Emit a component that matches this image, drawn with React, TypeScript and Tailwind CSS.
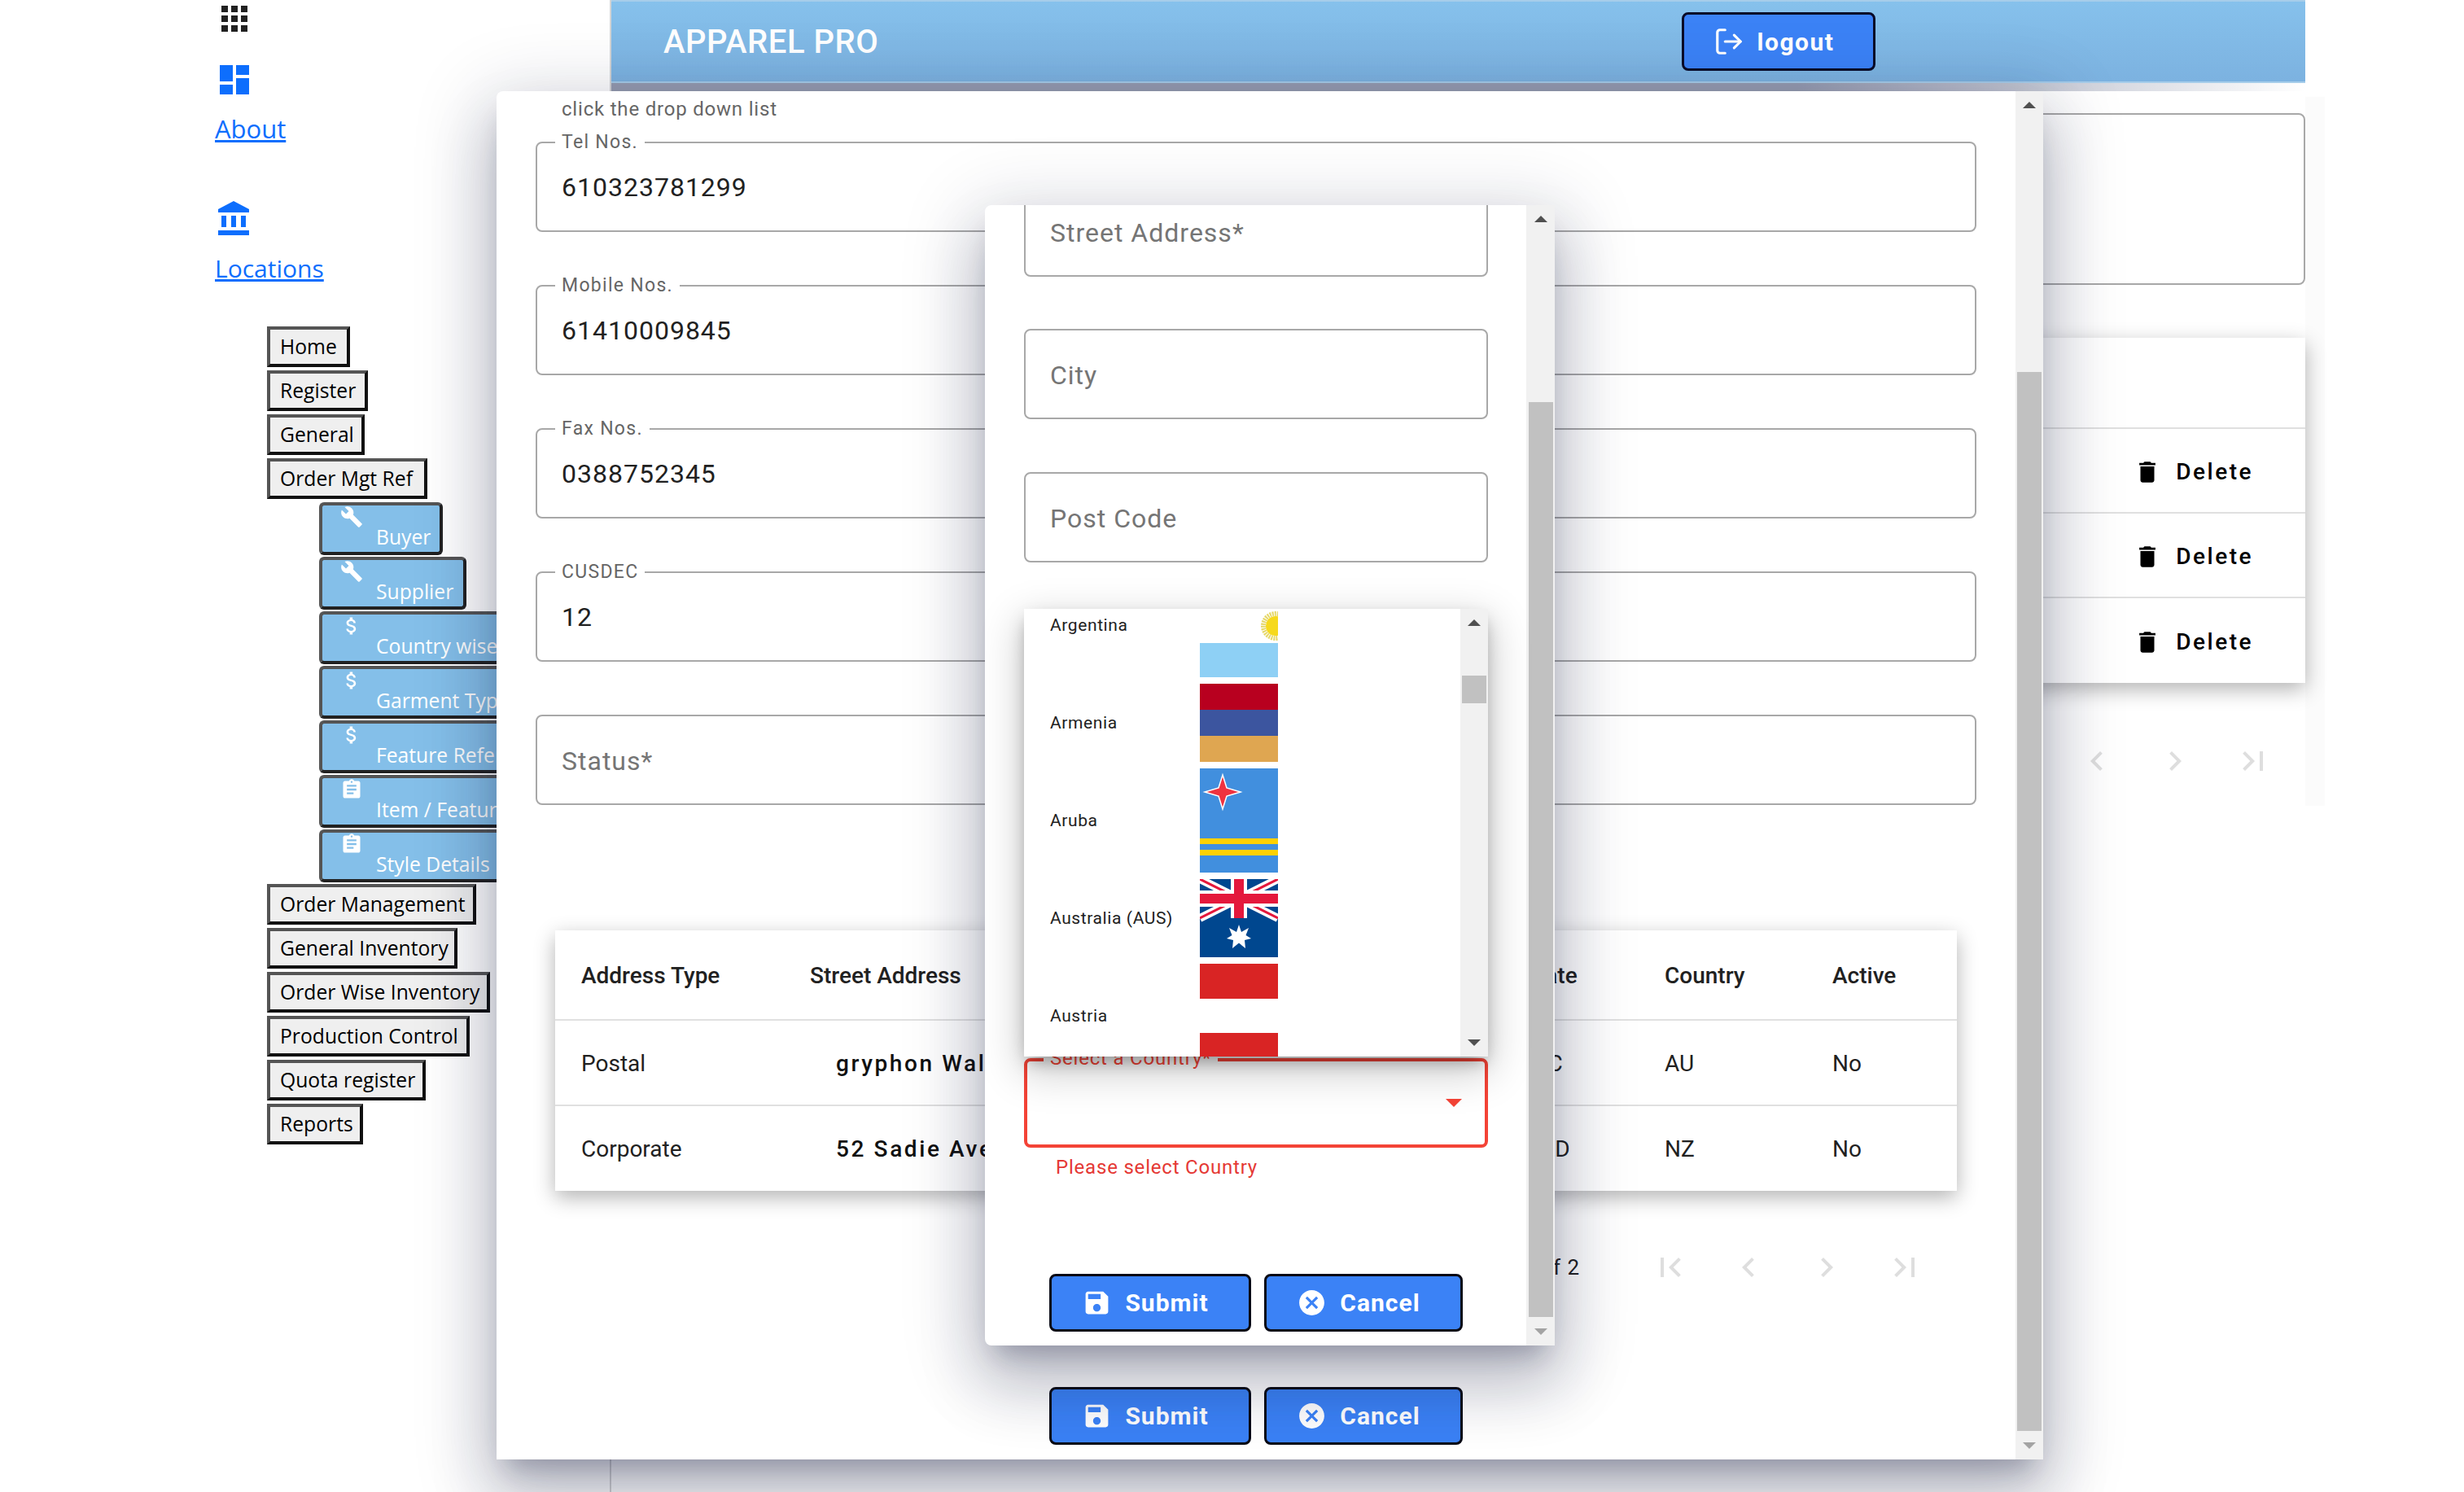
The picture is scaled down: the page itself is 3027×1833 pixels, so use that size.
import { LogOut } from 'lucide-react';
import type { ReactNode } from 'react';

const ICONS = {
  apps: 'M4 8h4V4H4v4zm6 12h4v-4h-4v4zm-6 0h4v-4H4v4zm0-6h4v-4H4v4zm6 0h4v-4h-4v4zm6-10v4h4V4h-4zm-6 4h4V4h-4v4zm6 6h4v-4h-4v4zm0 6h4v-4h-4v4z',
  dashboard: 'M3 13h8V3H3v10zm0 8h8v-6H3v6zm10 0h8V11h-8v10zm0-18v6h8V3h-8z',
  bank: 'M4 10v7h3v-7H4zm6 0v7h3v-7h-3zM2 22h19v-3H2v3zm14-12v7h3v-7h-3zm-4.5-9L2 6v2h19V6l-9.5-5z',
  build: 'M22.7 19l-9.1-9.1c.9-2.3.4-5-1.5-6.9-2-2-5-2.4-7.4-1.3L9 6 6 9 1.6 4.7C.4 7.1.9 10.1 2.9 12.1c1.9 1.9 4.6 2.4 6.9 1.5l9.1 9.1c.4.4 1 .4 1.4 0l2.3-2.3c.5-.4.5-1.1.1-1.4z',
  money: 'M11.8 10.9c-2.27-.59-3-1.2-3-2.15 0-1.09 1.01-1.85 2.7-1.85 1.78 0 2.44.85 2.5 2.1h2.21c-.07-1.72-1.12-3.3-3.21-3.81V3h-3v2.16c-1.94.42-3.5 1.68-3.5 3.61 0 2.31 1.91 3.46 4.7 4.13 2.5.6 3 1.48 3 2.41 0 .69-.49 1.79-2.7 1.79-2.06 0-2.87-.92-2.98-2.1h-2.2c.12 2.19 1.76 3.42 3.68 3.83V21h3v-2.15c1.95-.37 3.5-1.5 3.5-3.55 0-2.84-2.43-3.81-4.7-4.4z',
  assignment: 'M19 3h-4.18C14.4 1.84 13.3 1 12 1c-1.3 0-2.4.84-2.82 2H5c-1.1 0-2 .9-2 2v14c0 1.1.9 2 2 2h14c1.1 0 2-.9 2-2V5c0-1.1-.9-2-2-2zm-7 0c.55 0 1 .45 1 1s-.45 1-1 1-1-.45-1-1 .45-1 1-1zm2 14H7v-2h7v2zm3-4H7v-2h10v2zm0-4H7V7h10v2z',
  save: 'M17 3H5c-1.11 0-2 .9-2 2v14c0 1.1.89 2 2 2h14c1.1 0 2-.9 2-2V7l-4-4zm-5 16c-1.66 0-3-1.34-3-3s1.34-3 3-3 3 1.34 3 3-1.34 3-3 3zm3-10H5V5h10v4z',
  cancel: 'M12 2C6.47 2 2 6.47 2 12s4.47 10 10 10 10-4.47 10-10S17.53 2 12 2zm5 13.59L15.59 17 12 13.41 8.41 17 7 15.59 10.59 12 7 8.41 8.41 7 12 10.59 15.59 7 17 8.41 13.41 12 17 15.59z',
  trash: 'M6 19c0 1.1.9 2 2 2h8c1.1 0 2-.9 2-2V7H6v12zM19 4h-3.5l-1-1h-5l-1 1H5v2h14V4z',
  first: 'M18.41 16.59L13.82 12l4.59-4.59L17 6l-6 6 6 6zM6 6h2v12H6z',
  prev: 'M15.41 7.41L14 6l-6 6 6 6 1.41-1.41L10.83 12z',
  next: 'M10 6L8.59 7.41 13.17 12l-4.58 4.59L10 18l6-6z',
  last: 'M5.59 7.41L10.18 12l-4.59 4.59L7 18l6-6-6-6zM16 6h2v12h-2z',
};

type IconName = keyof typeof ICONS;

function Icon({ name, className }: { name: IconName; className: string }) {
  return (
    <svg viewBox="0 0 24 24" fill="currentColor" className={className}>
      <path d={ICONS[name]} />
    </svg>
  );
}

const DIALOG_SHADOW =
  'shadow-[0_22px_30px_-14px_rgba(20,25,60,0.28),0_48px_76px_6px_rgba(20,25,60,0.18),0_18px_92px_16px_rgba(20,25,60,0.16)]';

const TOP_MENU_A = [
  { label: 'Home', width: 'w-[102px]' },
  { label: 'Register', width: 'w-[124px]' },
  { label: 'General', width: 'w-[120px]' },
  { label: 'Order Mgt Ref', width: 'w-[197px]' },
];

const SUB_MENU: { label: string; icon: IconName; width: string }[] = [
  { label: 'Buyer', icon: 'build', width: 'w-[152px]' },
  { label: 'Supplier', icon: 'build', width: 'w-[181px]' },
  { label: 'Country wise Price', icon: 'money', width: 'w-[330px]' },
  { label: 'Garment Type', icon: 'money', width: 'w-[300px]' },
  { label: 'Feature Reference', icon: 'money', width: 'w-[330px]' },
  { label: 'Item / Feature', icon: 'assignment', width: 'w-[300px]' },
  { label: 'Style Details', icon: 'assignment', width: 'w-[300px]' },
];

const TOP_MENU_B = [
  { label: 'Order Management', width: 'w-[257px]' },
  { label: 'General Inventory', width: 'w-[234px]' },
  { label: 'Order Wise Inventory', width: 'w-[274px]' },
  { label: 'Production Control', width: 'w-[249px]' },
  { label: 'Quota register', width: 'w-[195px]' },
  { label: 'Reports', width: 'w-[118px]' },
];

function MenuButton({ label, width }: { label: string; width: string }) {
  return (
    <div
      className={`${width} h-[50px] mb-[4px] bg-[#efefef] border-[4px] border-t-[#555] border-l-[#555] border-r-[#111] border-b-[#111] pl-[12px] flex items-center font-['Open_Sans',sans-serif] text-[24.7px] text-black whitespace-nowrap`}
    >
      {label}
    </div>
  );
}

function SubMenuButton({ label, icon, width }: { label: string; icon: IconName; width: string }) {
  return (
    <div
      className={`${width} h-[65px] mb-[2px] shrink-0 bg-[#84bfe9] rounded-[6px] border-[4px] border-t-[#555] border-l-[#555] border-r-[#222] border-b-[#222] pl-[22px] flex flex-col font-['Open_Sans',sans-serif] text-[24.7px] leading-[30px] text-white whitespace-nowrap`}
    >
      <Icon name={icon} className="w-[28px] h-[28px] shrink-0 text-white" />
      <span className="ml-[44px] -mt-[4px]">{label}</span>
    </div>
  );
}

function Sidebar() {
  return (
    <aside className="w-[749px] shrink-0 pl-[264px] flex flex-col">
      <Icon name="apps" className="w-[48px] h-[48px] -mt-[1px] text-[#212121]" />
      <Icon name="dashboard" className="w-[48px] h-[48px] mt-[27px] text-[#0d6efd]" />
      <a className="self-start mt-[13px] font-['Open_Sans',sans-serif] text-[31px] leading-[46px] text-[#0d6efd] underline">
        About
      </a>
      <Icon name="bank" className="w-[48px] h-[48px] mt-[64px] text-[#0d6efd]" />
      <a className="self-start mt-[14px] font-['Open_Sans',sans-serif] text-[30px] leading-[46px] text-[#0d6efd] underline">
        Locations
      </a>
      <nav className="mt-[48px] ml-[64px] flex flex-col items-start">
        {TOP_MENU_A.map(m => (
          <MenuButton key={m.label} {...m} />
        ))}
        <div className="ml-[64px] flex flex-col items-start">
          {SUB_MENU.map(m => (
            <SubMenuButton key={m.label} {...m} />
          ))}
        </div>
        {TOP_MENU_B.map(m => (
          <MenuButton key={m.label} {...m} />
        ))}
      </nav>
    </aside>
  );
}

function Field({ label, value, placeholder, className }: { label?: string; value?: string; placeholder?: string; className: string }) {
  return (
    <div className={`relative h-[111px] shrink-0 rounded-[8px] border-2 border-[#a8a8a8] pl-[30px] flex items-center font-['Roboto',sans-serif] tracking-[1px] ${className}`}>
      {label && (
        <span className="absolute left-[22px] -top-[15px] bg-white px-[8px] text-[23px] leading-[28px] text-[#666] tracking-[1.3px]">
          {label}
        </span>
      )}
      {value && <span className="text-[32px] text-[#212121]">{value}</span>}
      {placeholder && <span className="pt-[2px] text-[32px] text-[#757575]">{placeholder}</span>}
    </div>
  );
}

function ActionButtons() {
  return (
    <div className="flex justify-center gap-[16px] font-['Roboto',sans-serif] font-bold text-[30px] tracking-[1px] text-white">
      <button type="button" className="w-[248px] h-[71px] pr-[12px] bg-[#3b82f6] border-[3px] border-[#0a0a14] rounded-[8px] flex items-center justify-center gap-[16px]">
        <Icon name="save" className="w-[37px] h-[37px]" />
        Submit
      </button>
      <button type="button" className="w-[244px] h-[71px] pr-[12px] bg-[#3b82f6] border-[3px] border-[#0a0a14] rounded-[8px] flex items-center justify-center gap-[16px]">
        <Icon name="cancel" className="w-[37px] h-[37px]" />
        Cancel
      </button>
    </div>
  );
}

function Scrollbar({ width, thumb, downColor }: { width: string; thumb: string; downColor: string }) {
  return (
    <div className={`${width} shrink-0 h-full bg-[#f1f1f1] flex flex-col items-center relative`}>
      <div className="h-[34px] w-full flex items-center justify-center shrink-0">
        <div className="w-0 h-0 border-x-[8px] border-x-transparent border-b-[8px] border-b-[#505050]" />
      </div>
      <div className={`w-[30px] bg-[#c1c1c1] ${thumb}`} />
      <div className="absolute bottom-0 h-[34px] w-full flex items-center justify-center">
        <div className={`w-0 h-0 border-x-[8px] border-x-transparent border-t-[8px] ${downColor}`} />
      </div>
    </div>
  );
}

const ADDRESS_ROWS = [
  { type: 'Postal', street: 'gryphon Walk', state: 'VIC', country: 'AU', active: 'No' },
  { type: 'Corporate', street: '52 Sadie Ave', state: 'QLD', country: 'NZ', active: 'No' },
];

const TABLE_COLS = 'grid grid-cols-[281px_877px_173px_206px_1fr] pl-[32px] items-center';

function AddressTable() {
  return (
    <div className="ml-[24px] w-[1722px] bg-white shadow-[0_8px_24px_rgba(0,0,0,0.3)] font-['Roboto',sans-serif] text-[28px] text-[#212121]">
      <div className={`${TABLE_COLS} h-[111px] pt-[2px] border-b-2 border-[#e0e0e0] font-medium`}>
        <span>Address Type</span>
        <span>Street Address</span>
        <span>State</span>
        <span>Country</span>
        <span>Active</span>
      </div>
      {ADDRESS_ROWS.map((r, i) => (
        <div key={r.type} className={`${TABLE_COLS} pt-[2px] ${i === 0 ? 'h-[105px] border-b-2 border-[#e0e0e0]' : 'h-[104px]'}`}>
          <span>{r.type}</span>
          <span className="pl-[32px] font-medium tracking-[2.6px] text-[#111]">{r.street}</span>
          <span className="pl-[4px]">{r.state}</span>
          <span>{r.country}</span>
          <span>{r.active}</span>
        </div>
      ))}
    </div>
  );
}

function Pager({ children, className, icons }: { children?: ReactNode; className: string; icons: IconName[] }) {
  return (
    <div className={`flex items-center justify-end h-[96px] font-['Roboto',sans-serif] text-[26px] text-[#212121] tracking-[1px] ${className}`}>
      {children}
      {icons.map(n => (
        <div key={n} className="w-[96px] flex justify-center">
          <Icon name={n} className="w-[48px] h-[48px] text-[#dedede]" />
        </div>
      ))}
    </div>
  );
}

function MainDialog() {
  return (
    <div className={`absolute left-[610px] top-[112px] w-[1900px] h-[1681px] z-10 bg-white rounded-tl-[8px] flex ${DIALOG_SHADOW}`}>
      <div className="flex-1 min-w-0 overflow-hidden pl-[48px] pr-[48px] flex flex-col">
        <p className="pl-[32px] mt-[8px] h-[28px] font-['Roboto',sans-serif] text-[24px] leading-[28px] tracking-[0.8px] text-[#666]">
          click the drop down list
        </p>
        <Field label="Tel Nos." value="610323781299" className="mt-[26px]" />
        <Field label="Mobile Nos." value="61410009845" className="mt-[65px]" />
        <Field label="Fax Nos." value="0388752345" className="mt-[65px]" />
        <Field label="CUSDEC" value="12" className="mt-[65px]" />
        <Field placeholder="Status*" className="mt-[65px]" />
        <div className="mt-[154px]">
          <AddressTable />
        </div>
        <Pager className="mt-[46px] w-[1746px] pr-[16px]" icons={['first', 'prev', 'next', 'last']}>
          <span className="mr-[63px]">1-2 of 2</span>
        </Pager>
        <div className="mt-[99px]">
          <ActionButtons />
        </div>
      </div>
      <Scrollbar width="w-[34px]" thumb="mt-[311px] h-[1301px]" downColor="border-t-[#a3a3a3]" />
    </div>
  );
}

function CountryDialog() {
  return (
    <div className={`absolute left-[1210px] top-[252px] w-[700px] h-[1401px] z-20 bg-white rounded-l-[8px] flex ${DIALOG_SHADOW}`}>
      <div className="flex-1 min-w-0 overflow-hidden pl-[48px] pr-[47px] flex flex-col">
        <Field placeholder="Street Address*" className="-mt-[23px]" />
        <Field placeholder="City" className="mt-[64px]" />
        <Field placeholder="Post Code" className="mt-[65px]" />
        <div className="relative mt-[609px] h-[110px] shrink-0 rounded-[8px] border-[4px] border-[#f44336] flex items-center justify-end pr-[28px]">
          <span className="absolute left-[20px] -top-[18px] bg-white px-[8px] font-['Roboto',sans-serif] text-[24px] leading-[28px] tracking-[0.8px] text-[#f44336]">
            Select a Country*
          </span>
          <div className="w-0 h-0 border-x-[10px] border-x-transparent border-t-[10px] border-t-[#f44336]" />
        </div>
        <p className="mt-[10px] pl-[39px] h-[28px] font-['Roboto',sans-serif] text-[24px] leading-[28px] tracking-[0.8px] text-[#e53935]">
          Please select Country
        </p>
        <div className="mt-[117px]">
          <ActionButtons />
        </div>
      </div>
      <Scrollbar width="w-[35px]" thumb="mt-[208px] h-[1124px]" downColor="border-t-[#a3a3a3]" />
    </div>
  );
}

function FlagArgentina() {
  return (
    <svg viewBox="0 0 96 128" className="w-[96px] h-[128px] shrink-0">
      <rect width="96" height="128" fill="#fff" />
      <rect width="96" height="43" fill="#8ed0f5" />
      <rect y="86" width="96" height="42" fill="#8ed0f5" />
      <circle cx="93" cy="65" r="15" fill="none" stroke="#e6d86a" strokeWidth="6" strokeDasharray="2 1" />
      <circle cx="93" cy="65" r="12" fill="#f6d91c" />
    </svg>
  );
}

function FlagArmenia() {
  return (
    <svg viewBox="0 0 96 96" className="w-[96px] h-[96px] shrink-0">
      <rect width="96" height="32" fill="#b8001f" />
      <rect y="32" width="96" height="32" fill="#3c559f" />
      <rect y="64" width="96" height="32" fill="#dfa651" />
    </svg>
  );
}

function FlagAruba() {
  return (
    <svg viewBox="0 0 96 128" className="w-[96px] h-[128px] shrink-0">
      <rect width="96" height="128" fill="#418fde" />
      <rect y="86" width="96" height="7" fill="#ffd100" />
      <rect y="100" width="96" height="7" fill="#ffd100" />
      <path d="M28 8 L33 24 L50 29 L33 34 L28 50 L23 34 L6 29 L23 24 Z" fill="#ef3340" stroke="#fff" strokeWidth="1.5" />
    </svg>
  );
}

function FlagAustralia() {
  return (
    <svg viewBox="0 0 96 96" className="w-[96px] h-[96px] shrink-0">
      <rect width="96" height="96" fill="#00478f" />
      <path d="M0 0 L96 48 M96 0 L0 48" stroke="#fff" strokeWidth="10" />
      <path d="M0 0 L96 48 M96 0 L0 48" stroke="#e4183c" strokeWidth="3" />
      <rect x="38" width="20" height="48" fill="#fff" />
      <rect y="14" width="96" height="20" fill="#fff" />
      <rect x="42" width="12" height="48" fill="#e4183c" />
      <rect y="18" width="96" height="12" fill="#e4183c" />
      <path d="M48 56 L51 65 L60 60 L56.5 69 L63 73 L55 75 L56 85 L48 78.5 L40 85 L41 75 L33 73 L39.5 69 L36 60 L45 65 Z" fill="#fff" />
    </svg>
  );
}

function FlagAustria() {
  return (
    <svg viewBox="0 0 96 128" className="w-[96px] h-[128px] shrink-0">
      <rect width="96" height="128" fill="#fff" />
      <rect width="96" height="43" fill="#d92424" />
      <rect y="85" width="96" height="43" fill="#d92424" />
    </svg>
  );
}

const COUNTRIES = [
  { name: 'Argentina', flag: <FlagArgentina /> },
  { name: 'Armenia', flag: <FlagArmenia /> },
  { name: 'Aruba', flag: <FlagAruba /> },
  { name: 'Australia (AUS)', flag: <FlagAustralia /> },
  { name: 'Austria', flag: <FlagAustria /> },
];

function CountryMenu() {
  return (
    <div className="absolute left-[1258px] top-[748px] w-[570px] h-[550px] z-30 bg-white flex overflow-hidden shadow-[0_10px_20px_-5px_rgba(0,0,0,0.35),0_16px_48px_4px_rgba(0,0,0,0.2)]">
      <ul className="flex-1 min-w-0 -mt-[44px] flex flex-col gap-[8px] font-['Roboto',sans-serif] text-[21px] tracking-[0.6px] text-[#212121]">
        {COUNTRIES.map(c => (
          <li key={c.name} className="flex items-center pl-[32px]">
            <span className="w-[184px] shrink-0 whitespace-nowrap pt-[2px]">{c.name}</span>
            {c.flag}
          </li>
        ))}
      </ul>
      <Scrollbar width="w-[34px]" thumb="mt-[48px] h-[34px]" downColor="border-t-[#505050]" />
    </div>
  );
}

function MainColumn() {
  return (
    <main className="w-[2107px] shrink-0">
      <div className="w-[2083px] border-l-2 border-[#d5d5d5]">
        <header className="h-[102px] bg-gradient-to-b from-[#86c1ec] to-[#7cb2e0] flex items-center justify-between pl-[64px] pr-[528px] border-y-2 border-[#a6cdea] font-['Roboto',sans-serif]">
          <h1 className="text-[40px] font-medium text-white tracking-[0.5px] pt-[2px]">APPAREL PRO</h1>
          <button type="button" className="w-[238px] h-[72px] pr-[12px] bg-[#3b82f6] border-[3px] border-[#0a0a28] rounded-[8px] flex items-center justify-center gap-[16px] text-white font-bold text-[30px] tracking-[1.5px]">
            <LogOut className="w-[38px] h-[38px]" strokeWidth={2} />
            logout
          </button>
        </header>
        <div className="h-[10px] bg-gradient-to-r from-[#969cb0] via-[#969cb0] via-70% to-[#fff]" />
      </div>
      <div className="mt-[7px] h-[871px] bg-[#fbfbfb]">
        <div className="w-[2083px] h-full bg-white border-l-2 border-[#d5d5d5] pt-[20px]">
          <div className="h-[211px] rounded-[8px] border-2 border-[#a8a8a8] ml-[24px]" />
          <div className="mt-[65px] ml-[24px] bg-white shadow-[0_8px_24px_rgba(0,0,0,0.3)] font-['Roboto',sans-serif]">
            <div className="h-[112px] border-b-2 border-[#e0e0e0]" />
            {[0, 1, 2].map(i => (
              <div key={i} className={`h-[104px] pt-[3px] flex items-center justify-end pr-[64px] gap-[18px] text-[28px] font-medium tracking-[2.5px] text-black ${i < 2 ? 'border-b-2 border-[#e0e0e0]' : ''}`}>
                <Icon name="trash" className="w-[34px] h-[34px]" />
                Delete
              </div>
            ))}
          </div>
          <Pager className="mt-[48px] pr-[16px]" icons={['prev', 'next', 'last']} />
        </div>
      </div>
      <div className="h-full border-l-2 border-[#d5d5d5]" />
    </main>
  );
}

export default function App() {
  return (
    <div className="relative w-[3027px] h-[1833px] overflow-hidden bg-white flex">
      <Sidebar />
      <MainColumn />
      <MainDialog />
      <CountryDialog />
      <CountryMenu />
    </div>
  );
}
